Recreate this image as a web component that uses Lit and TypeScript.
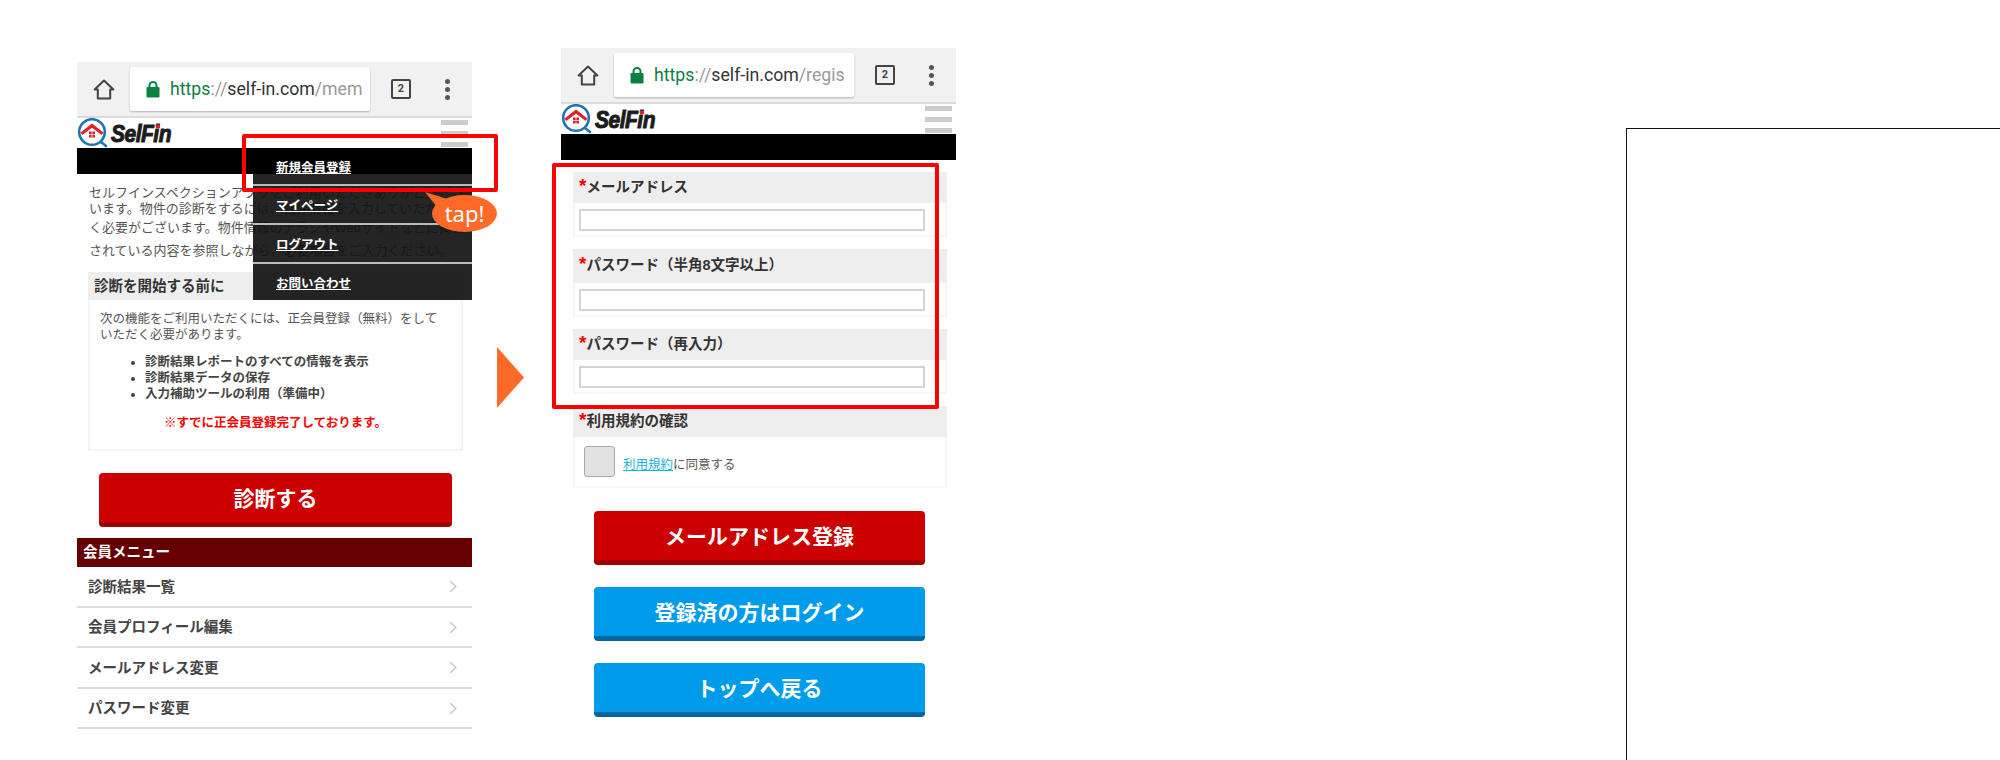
import { LitElement, html, css, svg } from "lit";
import { customElement } from "lit/decorators.js";

const logo = html`<div class="logo">
  <svg width="32" height="30" viewBox="0 0 32 30">
    <circle cx="15" cy="14" r="12.8" fill="#fff" stroke="#1f74b8" stroke-width="2.6"/>
    <path d="M24 24l5 4" stroke="#1f74b8" stroke-width="2.6" stroke-linecap="round"/>
    <path d="M3.6 14.5L15 5.6l11.4 8.9-1.6 2.6L15 9.8 5.2 17.1z" fill="#e0202a"/>
    <rect x="12" y="13.500" width="6" height="6" fill="#d8222c"/>
    <path d="M15 13.500v6M12 16.500h6" stroke="#fff" stroke-width=".7"/>
  </svg>
  <span class="brand">SelF<span class="i">i</span>n</span>
</div>`;

const bar = (path: string) => html`<div class="chrome">
  <svg class="home" width="22" height="21" viewBox="0 0 22 21">
    <path d="M11 1.600L1.600 10.500H4.800V19.500H17.200V10.500H20.400z" fill="none" stroke="#444" stroke-width="2" stroke-linejoin="round"/>
  </svg>
  <div class="url">
    <svg class="lock" width="14" height="18" viewBox="0 0 14 18">
      <path d="M3.500 8V5.500a3.500 3.500 0 0 1 7 0V8" fill="none" stroke="#0b8043" stroke-width="2"/>
      <rect x="0.500" y="7" width="13" height="10.500" rx="1.200" fill="#0b8043"/>
    </svg>
    <span class="addr"><span class="g">https</span><span class="l">://</span><span class="d">self-in.com</span><span class="l">/${path}</span></span>
  </div>
  <div class="tabs">2</div>
  <div class="dots"><i></i><i></i><i></i></div>
</div>`;

const head = (path: string) => html`${bar(path)}
  <div class="site">${logo}<div class="burger"><i></i><i></i><i></i></div></div>
  <div class="black"></div>`;

const chevron = svg`<svg class="chev" width="8" height="13" viewBox="0 0 8 13"><path d="M1 1l5.800 5.500L1 12" fill="none" stroke="#ccc" stroke-width="1.600"/></svg>`;

@customElement("app-root")
export class AppRoot extends LitElement {
  static styles = css`
    :host { display: block; width: 2000px; height: 760px; overflow: hidden; background: #fff; font-family: "Liberation Sans", "Noto Sans CJK JP", sans-serif; color: #555; }
    * { box-sizing: border-box; }
    .page { display: flex; align-items: flex-start; height: 760px; padding-left: 77px; }
    .phone { position: relative; flex: none; width: 395px; }
    .p1 { margin-top: 62px; }
    .p2 { margin-top: 48px; margin-left: 37px; }
    .arrow { flex: none; margin: 347px 0 0 25px; width: 27px; height: 61px; background: #ff6a28; clip-path: polygon(0 0, 100% 50%, 0 100%); }
    .frame { flex: none; width: 374px; height: 632px; margin: 128px 0 0 670px; border-left: 1px solid #111; border-top: 1px solid #111; }

    .chrome { display: flex; align-items: center; height: 56px; background: #f1f1f1; border-bottom: 2px solid #dcdcdc; }
    .home { margin-left: 16px; flex: none; }
    .url { display: flex; flex: none; align-items: center; width: 240px; height: 44px; margin-left: 15px; padding-left: 16px; background: #fff; border-radius: 2px; box-shadow: 0 1px 2px rgba(0,0,0,.25); overflow: hidden; }
    .lock { flex: none; }
    .addr { margin-left: 10px; font: 17.700px Roboto, sans-serif; white-space: nowrap; }
    .g { color: #0b8043; }
    .l { color: #999; }
    .d { color: #333; }
    .tabs { flex: none; width: 20px; height: 20px; margin-left: 21px; border: 2px solid #444; border-radius: 2px; font: bold 11px/16px Roboto, sans-serif; text-align: center; color: #444; }
    .dots { display: flex; flex-direction: column; gap: 3px; margin-left: 34px; }
    .dots i { display: block; width: 5px; height: 5px; border-radius: 50%; background: #555; }

    .site { display: flex; justify-content: space-between; height: 30px; }
    .logo { display: flex; align-items: flex-start; }
    .brand { display: block; margin: 4px 0 0 2px; font: italic bold 21px/24px "Liberation Sans", sans-serif; letter-spacing: -.5px; color: #1c1c1c; -webkit-text-stroke: .9px #1c1c1c; transform: scaleY(1.16); }
    .i { position: relative; }
    .i::after { content: ""; position: absolute; left: 2.500px; top: 4px; width: 4px; height: 3px; background: #e0202a; }
    .burger { display: flex; flex-direction: column; gap: 6px; margin: 2px 4px 0 0; }
    .burger i { display: block; width: 27px; height: 5px; background: #ccc; }
    .black { height: 26px; background: #000; }

    .intro { padding: 11px 12px 0; font-size: 13px; line-height: 16px; color: #555; }
    .intro p { margin: 0; white-space: nowrap; }
    .intro .gap3 { margin-top: 3px; }
    .intro .gap7 { margin-top: 7px; }
    .card { margin: 13px 9px 0 11px; border: 2px solid #f4f4f4; border-top: 0; }
    .card h2 { margin: 0 -2px; height: 28px; padding-left: 6px; background: #eee; font-size: 14.500px; line-height: 28px; font-weight: bold; color: #333; }
    .card .msg { margin: 11px 0 0 10px; font-size: 12.500px; line-height: 16px; color: #555; white-space: nowrap; }
    .card ul { margin: 11px 0 0; padding: 0 0 0 55px; font-size: 12.500px; line-height: 16px; font-weight: bold; color: #444; }
    .card .warn { margin: 13px 0 0; padding-bottom: 18px; text-align: center; font-size: 12.500px; line-height: 16px; font-weight: bold; color: #f00; }

    .btn { display: flex; align-items: center; justify-content: center; height: 54px; padding-bottom: 1px; border-radius: 4px; font-size: 21px; font-weight: bold; color: #fff; }
    .red { background: #cc0000; border-bottom: 5px solid #a00000; }
    .blue { background: #009ceb; border-bottom: 5px solid #00689f; }
    .go { margin: 22px 20px 0 22px; }

    .mhead { height: 29px; margin-top: 11px; padding-left: 6px; background: #600; font-size: 14.500px; line-height: 28px; font-weight: bold; color: #fff; }
    .row { display: flex; align-items: center; justify-content: space-between; height: 40.500px; padding: 0 15px 2px 11px; border-bottom: 2px solid #ddd; font-size: 14.500px; font-weight: bold; color: #444; }
    .chev { margin-top: 3px; }

    .menu { position: absolute; left: 176px; top: 86px; width: 219px; height: 152px; background: linear-gradient(transparent 26px, rgba(18,18,18,.92) 26px); }
    .item { display: flex; align-items: center; height: 39px; padding-left: 23px; border-bottom: 2px solid #bbb; font-size: 12.500px; font-weight: bold; color: #fff; text-decoration: underline; }
    .item:first-child { height: 38px; }
    .item:last-child { height: 36px; border-bottom: 0; }
    .mark { position: absolute; border: 4px solid #f00; border-radius: 2px; }
    .m1 { left: 165px; top: 72px; width: 256px; height: 58px; }
    .m2 { left: -9px; top: 115px; width: 387px; height: 246px; }
    .tip { position: absolute; left: 355px; top: 133px; width: 65px; height: 37px; border-radius: 50%; background: #ff6a28; font: 22px/36px "Noto Sans", sans-serif; text-align: center; color: #fff; }
    .tail { position: absolute; left: 348px; top: 130px; width: 32px; height: 22px; background: #ff6a28; clip-path: polygon(0 0, 100% 45%, 55% 100%); }

    .form { padding: 12px 9px 0 12px; }
    .field { margin-bottom: 12px; border: 2px solid #f6f6f6; border-top: 0; }
    .field h3 { margin: 0 -2px; height: 31px; padding-left: 6px; background: #eee; font-size: 14.500px; line-height: 30px; font-weight: bold; color: #333; }
    .field h3.tall { height: 34px; line-height: 33px; }
    .field b { font-size: 19px; line-height: 0; color: #f00; }
    .input { height: 22px; margin: 6px 20px 4px 4px; border: 2px solid #d4d4d4; background: #fff; }
    .agree { display: flex; align-items: center; height: 49px; padding-left: 9px; font-size: 12.500px; color: #555; }
    .check { width: 31px; height: 31px; margin-right: 8px; border: 1.500px solid #aaa; border-radius: 3px; background: #e2e2e2; }
    .terms { margin-top: 4px; }
    .agree a { color: #1ab0e0; text-decoration: underline; }
    .stack { display: flex; flex-direction: column; gap: 22px; margin: 23px 31px 0 33px; }
  `;

  render() {
    return html`<div class="page">
      <section class="phone p1">
        ${head("mem")}
        <div class="intro">
          <p>セルフインスペクションアプリをご利用いただきありがとうござ</p>
          <p>います。物件の診断をするには、物件情報を入力していただ</p>
          <p class="gap3">く必要がございます。物件情報のチラシやWebサイトなどに掲載</p>
          <p class="gap7">されている内容を参照しながら、必要項目をご入力ください。</p>
        </div>
        <div class="card">
          <h2>診断を開始する前に</h2>
          <p class="msg">次の機能をご利用いただくには、正会員登録（無料）をして<br>いただく必要があります。</p>
          <ul>
            <li>診断結果レポートのすべての情報を表示</li>
            <li>診断結果データの保存</li>
            <li>入力補助ツールの利用（準備中）</li>
          </ul>
          <p class="warn">※すでに正会員登録完了しております。</p>
        </div>
        <div class="btn red go">診断する</div>
        <div class="mhead">会員メニュー</div>
        <div class="row">診断結果一覧${chevron}</div>
        <div class="row">会員プロフィール編集${chevron}</div>
        <div class="row">メールアドレス変更${chevron}</div>
        <div class="row">パスワード変更${chevron}</div>
        <nav class="menu">
          <div class="item">新規会員登録</div>
          <div class="item">マイページ</div>
          <div class="item">ログアウト</div>
          <div class="item">お問い合わせ</div>
        </nav>
        <div class="mark m1"></div>
        <div class="tail"></div>
        <div class="tip">tap!</div>
      </section>
      <div class="arrow"></div>
      <section class="phone p2">
        ${head("regis")}
        <div class="form">
          <div class="field"><h3><b>*</b>メールアドレス</h3><div class="input"></div></div>
          <div class="field"><h3 class="tall"><b>*</b>パスワード（半角8文字以上）</h3><div class="input"></div></div>
          <div class="field"><h3><b>*</b>パスワード（再入力）</h3><div class="input"></div></div>
          <div class="field"><h3><b>*</b>利用規約の確認</h3>
            <div class="agree"><div class="check"></div><span class="terms"><a>利用規約</a>に同意する</span></div>
          </div>
        </div>
        <div class="stack">
          <div class="btn red">メールアドレス登録</div>
          <div class="btn blue">登録済の方はログイン</div>
          <div class="btn blue">トップへ戻る</div>
        </div>
        <div class="mark m2"></div>
      </section>
      <div class="frame"></div>
    </div>`;
  }
}
